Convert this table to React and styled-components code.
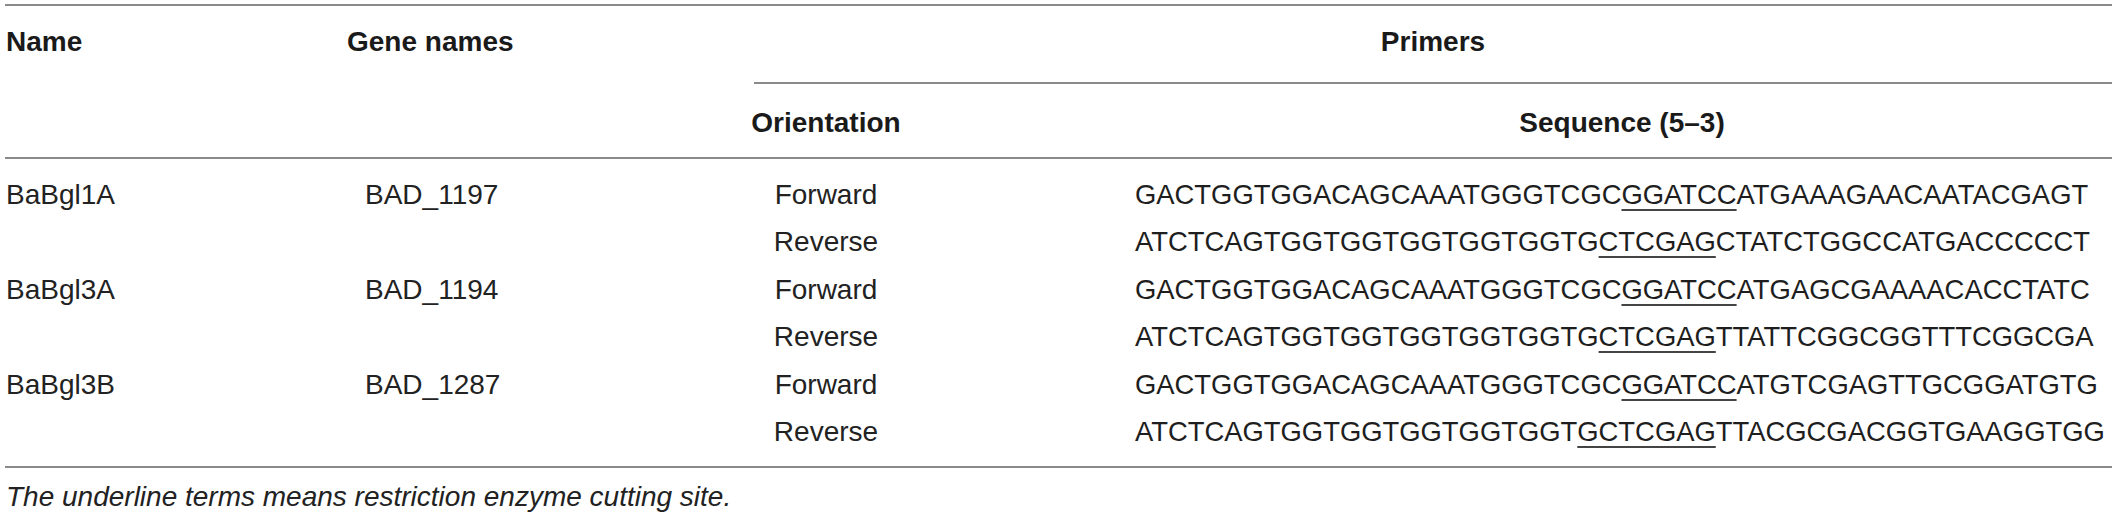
import React from "react";
import styled, { createGlobalStyle, css } from "styled-components";

const GlobalStyle = createGlobalStyle`
  html, body {
    margin: 0;
    padding: 0;
    background: #ffffff;
  }
  body {
    font-family: "Liberation Sans", Arial, "Helvetica Neue", sans-serif;
    color: #1c1c1c;
  }
`;

const RULE = "#8a8a8a";

const columns = css`
  display: grid;
  grid-template-columns: 342px 407px 144px 1fr;
`;

const Wrapper = styled.div`
  width: 2107px;
  margin: 4px 0 0 5px;
`;

const Head = styled.div`
  ${columns};
  grid-template-rows: 78px 73px;
  border-top: 2px solid ${RULE};
  border-bottom: 2px solid ${RULE};
`;

const HeadCell = styled.div`
  font-weight: 700;
  font-size: 28px;
  line-height: 32px;
  color: #1a1a1a;
  white-space: nowrap;
  padding-top: ${(p) => p.$top ?? 20}px;
  padding-left: ${(p) => p.$pl ?? 0}px;
  grid-column: ${(p) => p.$col};
  grid-row: ${(p) => p.$row};
  display: flex;
  justify-content: ${(p) => (p.$center ? "center" : "flex-start")};
  align-items: flex-start;
  ${(p) =>
    p.$rule &&
    css`
      border-bottom: 2px solid ${RULE};
    `}
`;

const Body = styled.div`
  ${columns};
  grid-auto-rows: 47.6px;
  padding: 11.5px 0 10px;
  border-bottom: 2px solid ${RULE};
`;

const Cell = styled.div`
  font-size: 28px;
  line-height: 47.6px;
  color: #222;
  white-space: nowrap;
  padding-left: ${(p) => p.$pl ?? 0}px;
  display: flex;
  justify-content: ${(p) => (p.$center ? "center" : "flex-start")};
`;

const SeqCell = styled(Cell)`
  font-size: 27.4px;
  color: #1e1e1e;
`;

const Site = styled.span`
  text-decoration: underline;
  text-decoration-thickness: 2px;
  text-underline-offset: 5px;
  text-decoration-color: #444;
`;

const Note = styled.p`
  margin: 13px 0 0;
  font-style: italic;
  font-size: 28px;
  line-height: 32px;
  color: #222;
  padding-left: 1px;
  white-space: nowrap;
`;

const rows = [
  {
    name: "BaBgl1A",
    gene: "BAD_1197",
    fwd: ["GACTGGTGGACAGCAAATGGGTCGC", "GGATCC", "ATGAAAGAACAATACGAGT"],
    rev: ["ATCTCAGTGGTGGTGGTGGTGGTG", "CTCGAG", "CTATCTGGCCATGACCCCCT"],
  },
  {
    name: "BaBgl3A",
    gene: "BAD_1194",
    fwd: ["GACTGGTGGACAGCAAATGGGTCGC", "GGATCC", "ATGAGCGAAAACACCTATC"],
    rev: ["ATCTCAGTGGTGGTGGTGGTGGTG", "CTCGAG", "TTATTCGGCGGTTTCGGCGA"],
  },
  {
    name: "BaBgl3B",
    gene: "BAD_1287",
    fwd: ["GACTGGTGGACAGCAAATGGGTCGC", "GGATCC", "ATGTCGAGTTGCGGATGTG"],
    rev: ["ATCTCAGTGGTGGTGGTGGTGGT", "GCTCGAG", "TTACGCGACGGTGAAGGTGG"],
  },
];

function Sequence({ parts }) {
  const [pre, site, post] = parts;
  return (
    <SeqCell $pl={237}>
      <span>
        {pre}
        <Site>{site}</Site>
        {post}
      </span>
    </SeqCell>
  );
}

export default function App() {
  return (
    <>
      <GlobalStyle />
      <Wrapper>
        <Head>
          <HeadCell $col="1" $row="1" $pl={1}>
            Name
          </HeadCell>
          <HeadCell $col="2" $row="1">
            Gene names
          </HeadCell>
          <HeadCell $col="3 / 5" $row="1" $center $rule>
            Primers
          </HeadCell>
          <HeadCell $col="3" $row="2" $top={23} $center>
            Orientation
          </HeadCell>
          <HeadCell $col="4" $row="2" $top={23} $pl={234} $center>
            Sequence (5–3)
          </HeadCell>
        </Head>
        <Body>
          {rows.map((r) => (
            <React.Fragment key={r.name}>
              <Cell $pl={1}>{r.name}</Cell>
              <Cell $pl={18}>{r.gene}</Cell>
              <Cell $center>Forward</Cell>
              <Sequence parts={r.fwd} />
              <Cell />
              <Cell />
              <Cell $center>Reverse</Cell>
              <Sequence parts={r.rev} />
            </React.Fragment>
          ))}
        </Body>
        <Note>The underline terms means restriction enzyme cutting site.</Note>
      </Wrapper>
    </>
  );
}
